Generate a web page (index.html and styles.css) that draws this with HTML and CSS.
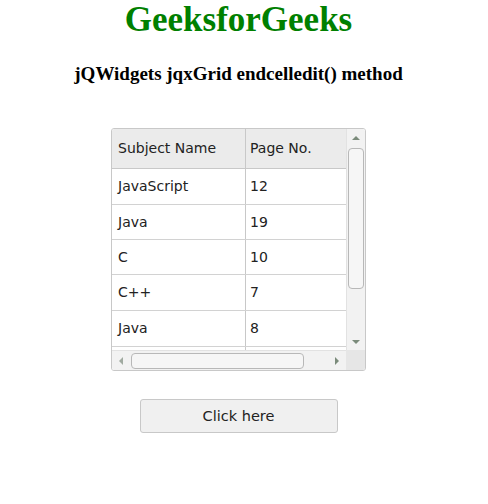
FILE: index.html
```html
<!DOCTYPE html>
<html>
<head>
<meta charset="utf-8">
<link rel="stylesheet" href="styles.css">
</head>
<body>
<div class="page">
  <h1 class="brand">GeeksforGeeks</h1>
  <h3 class="subtitle">jQWidgets jqxGrid endcelledit() method</h3>
  <div class="grid">
    <div class="data">
      <div class="row head">
        <div class="cell c1">Subject Name</div>
        <div class="cell c2">Page No.</div>
      </div>
      <div class="row r36"><div class="cell c1">JavaScript</div><div class="cell c2">12</div></div>
      <div class="row r35"><div class="cell c1">Java</div><div class="cell c2">19</div></div>
      <div class="row r35"><div class="cell c1">C</div><div class="cell c2">10</div></div>
      <div class="row r36"><div class="cell c1">C++</div><div class="cell c2">7</div></div>
      <div class="row r36"><div class="cell c1">Java</div><div class="cell c2">8</div></div>
      <div class="row r36"><div class="cell c1"></div><div class="cell c2"></div></div>
    </div>
    <div class="vscroll">
      <div class="sbtn vbtn"><span class="arr up"></span></div>
      <div class="vthumb"></div>
      <div class="spacer"></div>
      <div class="sbtn vbtn dn"><span class="arr down"></span></div>
    </div>
    <div class="hscroll">
      <div class="sbtn hbtn"><span class="arr left"></span></div>
      <div class="hthumb"></div>
      <div class="spacer"></div>
      <div class="sbtn hbtn rt"><span class="arr right"></span></div>
    </div>
    <div class="corner"></div>
  </div>
  <button class="btn">Click here</button>
</div>
</body>
</html>
```
FILE: styles.css
```css
html, body {
  margin: 0;
  padding: 0;
  background: #ffffff;
}
.page {
  width: 477px;
  display: flex;
  flex-direction: column;
  align-items: center;
}
.brand {
  margin: 0;
  font-family: "Liberation Serif", "Times New Roman", serif;
  font-weight: bold;
  font-size: 35px;
  line-height: normal;
  color: #008000;
}
.subtitle {
  margin: 23px 0 0 0;
  font-family: "Liberation Serif", "Times New Roman", serif;
  font-weight: bold;
  font-size: 19px;
  line-height: 22px;
  color: #000;
}
.grid {
  margin-top: 43px;
  display: grid;
  grid-template-columns: 234px 19px;
  grid-template-rows: 221px 20px;
  border: 1px solid #c8c8c8;
  border-radius: 3px;
  overflow: hidden;
  background: #fff;
}
.data {
  overflow: hidden;
  font-family: "DejaVu Sans", Verdana, sans-serif;
  font-size: 14px;
  color: #222;
}
.row {
  display: flex;
  box-sizing: border-box;
  border-bottom: 1px solid #d2d2d2;
}
.row.head {
  height: 40px;
  background: #ebebeb;
  border-bottom-color: #c8c8c8;
}
.r36 { height: 36px; }
.r35 { height: 35px; }
.cell {
  box-sizing: border-box;
  display: flex;
  align-items: center;
  padding-left: 6px;
  padding-bottom: 1px;
}
.c1 {
  width: 134px;
  border-right: 1px solid #c8c8c8;
}
.c2 {
  width: 100px;
  padding-left: 4px;
}
.vscroll {
  display: flex;
  flex-direction: column;
  align-items: center;
  background: #f2f2f2;
  border-left: 1px solid #e2e2e2;
}
.hscroll {
  display: flex;
  align-items: center;
  background: #f2f2f2;
  border-top: 1px solid #e2e2e2;
}
.corner {
  background: #e6e6e6;
}
.spacer { flex: 1; }
.sbtn {
  display: flex;
  align-items: center;
  justify-content: center;
}
.vbtn { width: 19px; height: 18px; }
.vbtn.dn { height: 17px; }
.hbtn { width: 17px; height: 19px; }
.hbtn.rt { width: 19px; }
.vthumb {
  margin-top: 1px;
  width: 14px;
  height: 139px;
  border: 1px solid #b8b8b8;
  border-radius: 4px;
  background: #f6f6f6;
}
.hthumb {
  margin-left: 2px;
  width: 171px;
  height: 14px;
  border: 1px solid #b8b8b8;
  border-radius: 4px;
  background: #f6f6f6;
}
.arr {
  width: 0;
  height: 0;
  display: block;
}
.arr.up {
  border-left: 4px solid transparent;
  border-right: 4px solid transparent;
  border-bottom: 4px solid #7b8b7b;
}
.arr.down {
  border-left: 4px solid transparent;
  border-right: 4px solid transparent;
  border-top: 4px solid #7b8b7b;
}
.arr.left {
  border-top: 4px solid transparent;
  border-bottom: 4px solid transparent;
  border-right: 4px solid #a0aaa0;
}
.arr.right {
  border-top: 4px solid transparent;
  border-bottom: 4px solid transparent;
  border-left: 4px solid #7b8b7b;
}
.btn {
  margin-top: 28px;
  width: 198px;
  height: 34px;
  border: 1px solid #c8c8c8;
  border-radius: 3px;
  background: #f0f0f0;
  font-family: "DejaVu Sans", Verdana, sans-serif;
  font-size: 14.5px;
  color: #222;
  padding: 0;
}
```
